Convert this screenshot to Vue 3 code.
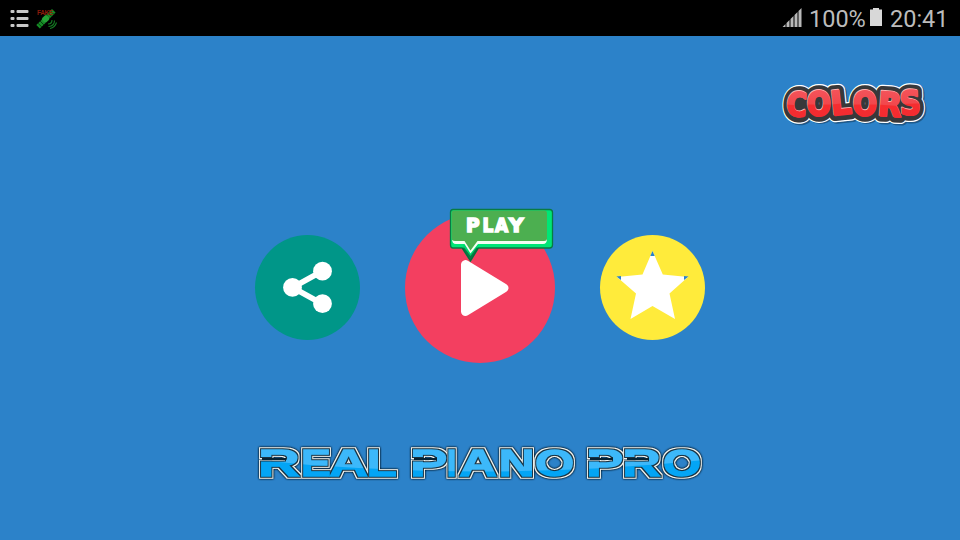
<script setup>
const colorsLetters = [
  { ch: 'C', x: 786, y: 115.5, sx: 0.83, r: 4 },
  { ch: 'O', x: 807, y: 115.5, sx: 0.86, r: 0 },
  { ch: 'L', x: 832, y: 115.5, sx: 0.97, r: -6 },
  { ch: 'O', x: 853, y: 115.5, sx: 0.86, r: 0 },
  { ch: 'R', x: 877.5, y: 115.5, sx: 0.93, r: 4 },
  { ch: 'S', x: 900.5, y: 115, sx: 0.87, r: -2 },
]

// ink: left bearing and ink width of the bold capitals, in em
const ink = {
  R: [0.067, 0.645], E: [0.067, 0.56], A: [0.015, 0.69], L: [0.067, 0.51],
  P: [0.067, 0.56], I: [0.067, 0.144], N: [0.067, 0.587], O: [0.041, 0.695],
}
const size = 36.5
const place = (ch, x1, x2) => {
  const [bearing, width] = ink[ch]
  const sx = (x2 - x1) / (width * size)
  return { ch, t: `translate(${x1 - bearing * size * sx} 476) scale(${sx} 1)` }
}
const titleLetters = [
  place('R', 262, 299), place('E', 304, 329), place('A', 330, 367), place('L', 370, 395),
  place('P', 414, 445), place('I', 449, 454), place('A', 460, 496), place('N', 502, 531), place('O', 537, 572),
  place('P', 590, 621), place('R', 626, 660), place('O', 665, 699),
]
const slits = [
  { x: 259, w: 27 }, { x: 411, w: 26 }, { x: 587, w: 26 }, { x: 624, w: 25 },
]
const playLetters = [
  { ch: 'P', x: 466, sx: 0.93 }, { ch: 'L', x: 482.5, sx: 0.85 },
  { ch: 'A', x: 495, sx: 0.85 }, { ch: 'Y', x: 509, sx: 1 },
]
</script>

<template>
  <div class="screen">
    <header class="status">
      <svg class="notices" width="60" height="36" viewBox="0 0 60 36">
        <g fill="#c8c8c8">
          <rect x="10.5" y="10" width="4" height="3" rx="1" /><rect x="16.5" y="10" width="12" height="3" rx="1" />
          <rect x="10.5" y="17" width="4" height="3" rx="1" /><rect x="16.5" y="17" width="12" height="3" rx="1" />
          <rect x="10.5" y="24" width="4" height="3" rx="1" /><rect x="16.5" y="24" width="12" height="3" rx="1" />
        </g>
        <g transform="rotate(-45 46 18.5)">
          <rect x="34.5" y="16.3" width="8" height="5" fill="#168c26" />
          <rect x="49" y="16" width="8" height="5" fill="#168c26" />
          <rect x="42" y="15.5" width="7" height="6" rx="2" fill="#24a136" />
          <path d="M37 16v6M40 16v6M51.5 15.5v6M54.5 15.5v6" stroke="#062f0b" stroke-width=".8" />
        </g>
        <path d="M48 24q4 0 4-4M48.5 26.5q6-.5 6-6M50 28.5q5-1 6.5-6" fill="none" stroke="#157c24" stroke-width="1.1" />
        <text x="37" y="15" class="fake" textLength="16">FAKE</text>
      </svg>
      <div class="system">
        <svg width="20" height="36" viewBox="781.500 0 20 36">
          <path d="M782 27l3-3v3zM786 27v-4l3-3v7zM790 27v-8l3-3v11zM794 27v-12l3-3v15zM798 27v-16l3-3v19z" fill="#b9b9b9" />
        </svg>
        <span class="percent">100%</span>
        <svg class="battery" width="12" height="36" viewBox="0 0 12 36">
          <path d="M3 8h6v1.5h3V26H0V9.500h3z" fill="#d8d8d8" />
        </svg>
        <span class="clock">20:41</span>
      </div>
    </header>

    <main class="menu">
      <svg class="colors" width="150" height="50" viewBox="780 80 150 50" role="img">
        <defs>
          <linearGradient id="red" gradientUnits="userSpaceOnUse" x1="0" y1="-25" x2="0" y2="1">
            <stop offset="0" stop-color="#f4535a" /><stop offset=".52" stop-color="#f2474c" />
            <stop offset=".56" stop-color="#f62d30" /><stop offset="1" stop-color="#f32b30" />
          </linearGradient>
        </defs>
        <g class="bubbly">
          <g v-for="layer in ['shadow', 'rim', 'body', 'light', 'face']" :key="layer" :class="layer">
            <text
              v-for="(l, i) in colorsLetters" :key="i"
              :transform="`translate(${l.x} ${l.y}) rotate(${l.r}) scale(${l.sx} 1)`"
            >{{ l.ch }}</text>
            <rect v-if="layer === 'body'" x="796" y="98" width="11" height="11" />
          </g>
        </g>
      </svg>

      <div class="actions">
        <button class="round share">
          <svg width="105" height="105" viewBox="255 235 105 105">
            <path d="M322.500 271L292.500 287.500l30 16.500" fill="none" stroke="#fff" stroke-width="5.600" />
            <g fill="#fff">
              <circle cx="292.500" cy="287.400" r="9.400" /><circle cx="322.500" cy="271.200" r="9.400" /><circle cx="322.500" cy="303.700" r="9.400" />
            </g>
          </svg>
        </button>
        <button class="round play">
          <svg width="150" height="150" viewBox="405 213 150 150">
            <path d="M465.500 264.500v47l38.500-23.500z" fill="#fff" stroke="#fff" stroke-width="9" stroke-linejoin="round" />
          </svg>
          <svg class="bubble" width="108" height="58" viewBox="448 206 108 58">
            <path d="M453 209.500h96.500q3 0 3 3V245q0 3-3 3H478.500L470.500 261l-8.500-13h-9q-2.500 0-2.500-3v-32.500q0-3 2.500-3z" fill="#00e676" stroke="#087b43" stroke-width="1.300" />
            <path d="M462 248l8.500 13 8-13-3-1-5 7-5-7z" fill="#075a36" opacity=".75" />
            <path d="M463 246l7.500 10 8-11-3-2h-10z" fill="#00d56b" />
            <path d="M452 239q0 5 4 5h8.500l6 9.500 7.500-9.500h65q4 0 4-5z" fill="#f4fff4" />
            <path d="M454 210.500h90q3 0 3 3V238.500q0 2.500-3 2.500h-66.500l-7 9.500-6-9.500H455q-3.500 0-3.500-3V213q0-2.500 2.500-2.500z" fill="#4caf50" />
            <g class="play-text">
              <text v-for="l in playLetters" :key="l.ch" :transform="`translate(${l.x} 232) scale(${l.sx} 1)`">{{ l.ch }}</text>
            </g>
          </svg>
        </button>
        <button class="round star">
          <svg width="105" height="105" viewBox="600 235 105 105">
            <path d="M652.500 251l10.300 23.500 25.200 2.500-18.500 16.500 5.500 25.500-22.500-13-22 13 5.500-25.500-19-16.500 25.500-2.500z" fill="#fff" />
            <path d="M652.500 251l2.200 5h-4.400zM616.500 276.500l4.500-.5v4zM688.500 276.500l-4.500-.5v4z" fill="#2c82c9" />
          </svg>
        </button>
      </div>

      <svg class="title" width="470" height="50" viewBox="245 438 470 50" role="img">
        <defs>
          <mask id="cut" maskUnits="userSpaceOnUse" x="245" y="438" width="470" height="50">
            <rect x="245" y="438" width="470" height="50" fill="#fff" />
            <rect v-for="s in slits" :key="s.x" :x="s.x" y="457" :width="s.w" height="4.500" fill="#000" />
          </mask>
          <mask id="letters" maskUnits="userSpaceOnUse" x="245" y="438" width="470" height="50">
            <g mask="url(#cut)" class="techno">
              <text v-for="(l, i) in titleLetters" :key="i" :transform="l.t">{{ l.ch }}</text>
            </g>
          </mask>
          <filter id="edges" filterUnits="userSpaceOnUse" x="245" y="438" width="470" height="50" color-interpolation-filters="sRGB">
            <feMorphology in="SourceAlpha" operator="dilate" radius="2" result="d2" />
            <feGaussianBlur in="d2" stdDeviation="1.3" result="blurred" />
            <feComponentTransfer in="blurred" result="soft"><feFuncA type="linear" slope="2.2" /></feComponentTransfer>
            <feFlood flood-color="#0b3252" /><feComposite in2="soft" operator="in" result="outer" />
            <feFlood flood-color="#f3f3ec" /><feComposite in2="d2" operator="in" result="white" />
            <feMorphology in="SourceAlpha" operator="dilate" radius="1" result="d1" />
            <feFlood flood-color="#062334" flood-opacity=".92" /><feComposite in2="d1" operator="in" result="dark" />
            <feMerge>
              <feMergeNode in="outer" /><feMergeNode in="white" /><feMergeNode in="dark" /><feMergeNode in="SourceGraphic" />
            </feMerge>
          </filter>
        </defs>
        <g filter="url(#edges)">
          <g mask="url(#letters)">
            <rect x="245" y="438" width="470" height="50" fill="#3cb8fa" />
            <path d="M245 459Q480 484 715 459V488H245z" fill="#03a5f5" />
          </g>
        </g>
        <rect v-for="s in slits" :key="s.x" :x="s.x + 3" y="458" :width="s.w - 3" height="2" fill="#062334" />
      </svg>
    </main>
  </div>
</template>

<style>
body { margin: 0; background: #2c82c9; }
</style>

<style scoped>
.screen { width: 960px; height: 540px; overflow: hidden; background: #2c82c9; font-family: Roboto, sans-serif; }
.status { height: 36px; display: flex; justify-content: space-between; background: #000; color: #bcbcbc; font-size: 23.5px; line-height: 38px; }
.fake { font: bold 6.5px "Liberation Sans", sans-serif; fill: #8c1b0b; }
.system { display: flex; padding-right: 12px; }
.percent { margin-left: 7px; width: 56px; }
.battery { margin-left: 5px; margin-right: 8px; }
.clock { width: 58px; white-space: nowrap; }
.menu { display: flex; flex-direction: column; align-items: center; padding-top: 44px; }
.colors { align-self: flex-end; margin-right: 30px; overflow: visible; }
.actions { display: flex; align-items: flex-start; gap: 45px; margin-top: 83px; }
.round { position: relative; display: block; border: 0; padding: 0; border-radius: 50%; width: 105px; height: 105px; margin-top: 22px; }
.round svg { display: block; }
.share { background: #009688; }
.play { background: #f33f60; width: 150px; height: 150px; margin-top: 0; }
.star { background: #ffeb3b; }
.round .bubble { position: absolute; left: 43px; top: -7px; }
.title { display: block; margin-top: 75px; }
.bubbly { font: bold 33px "DejaVu Sans", sans-serif; stroke-linejoin: round; }
.shadow { fill: #174870; stroke: #174870; stroke-width: 14px; transform: translate(1.5px, 1.5px); opacity: .7; }
.rim { fill: #fff; stroke: #fff; stroke-width: 14px; }
.body { fill: #38383a; stroke: #38383a; stroke-width: 11.5px; }
.body rect { stroke: none; }
.light { fill: #ffb3b3; stroke: #ffb3b3; stroke-width: 2.2px; transform: translate(-.5px, -.7px); }
.face { fill: url(#red); stroke: url(#red); stroke-width: 2px; }
.techno { font: bold 36.5px "Liberation Sans", sans-serif; fill: #fff; stroke: #fff; stroke-width: 1.3px; }
.play-text { font: bold 20px "DejaVu Sans", sans-serif; fill: #fff; stroke: #fff; stroke-width: 1.7px; }
</style>
